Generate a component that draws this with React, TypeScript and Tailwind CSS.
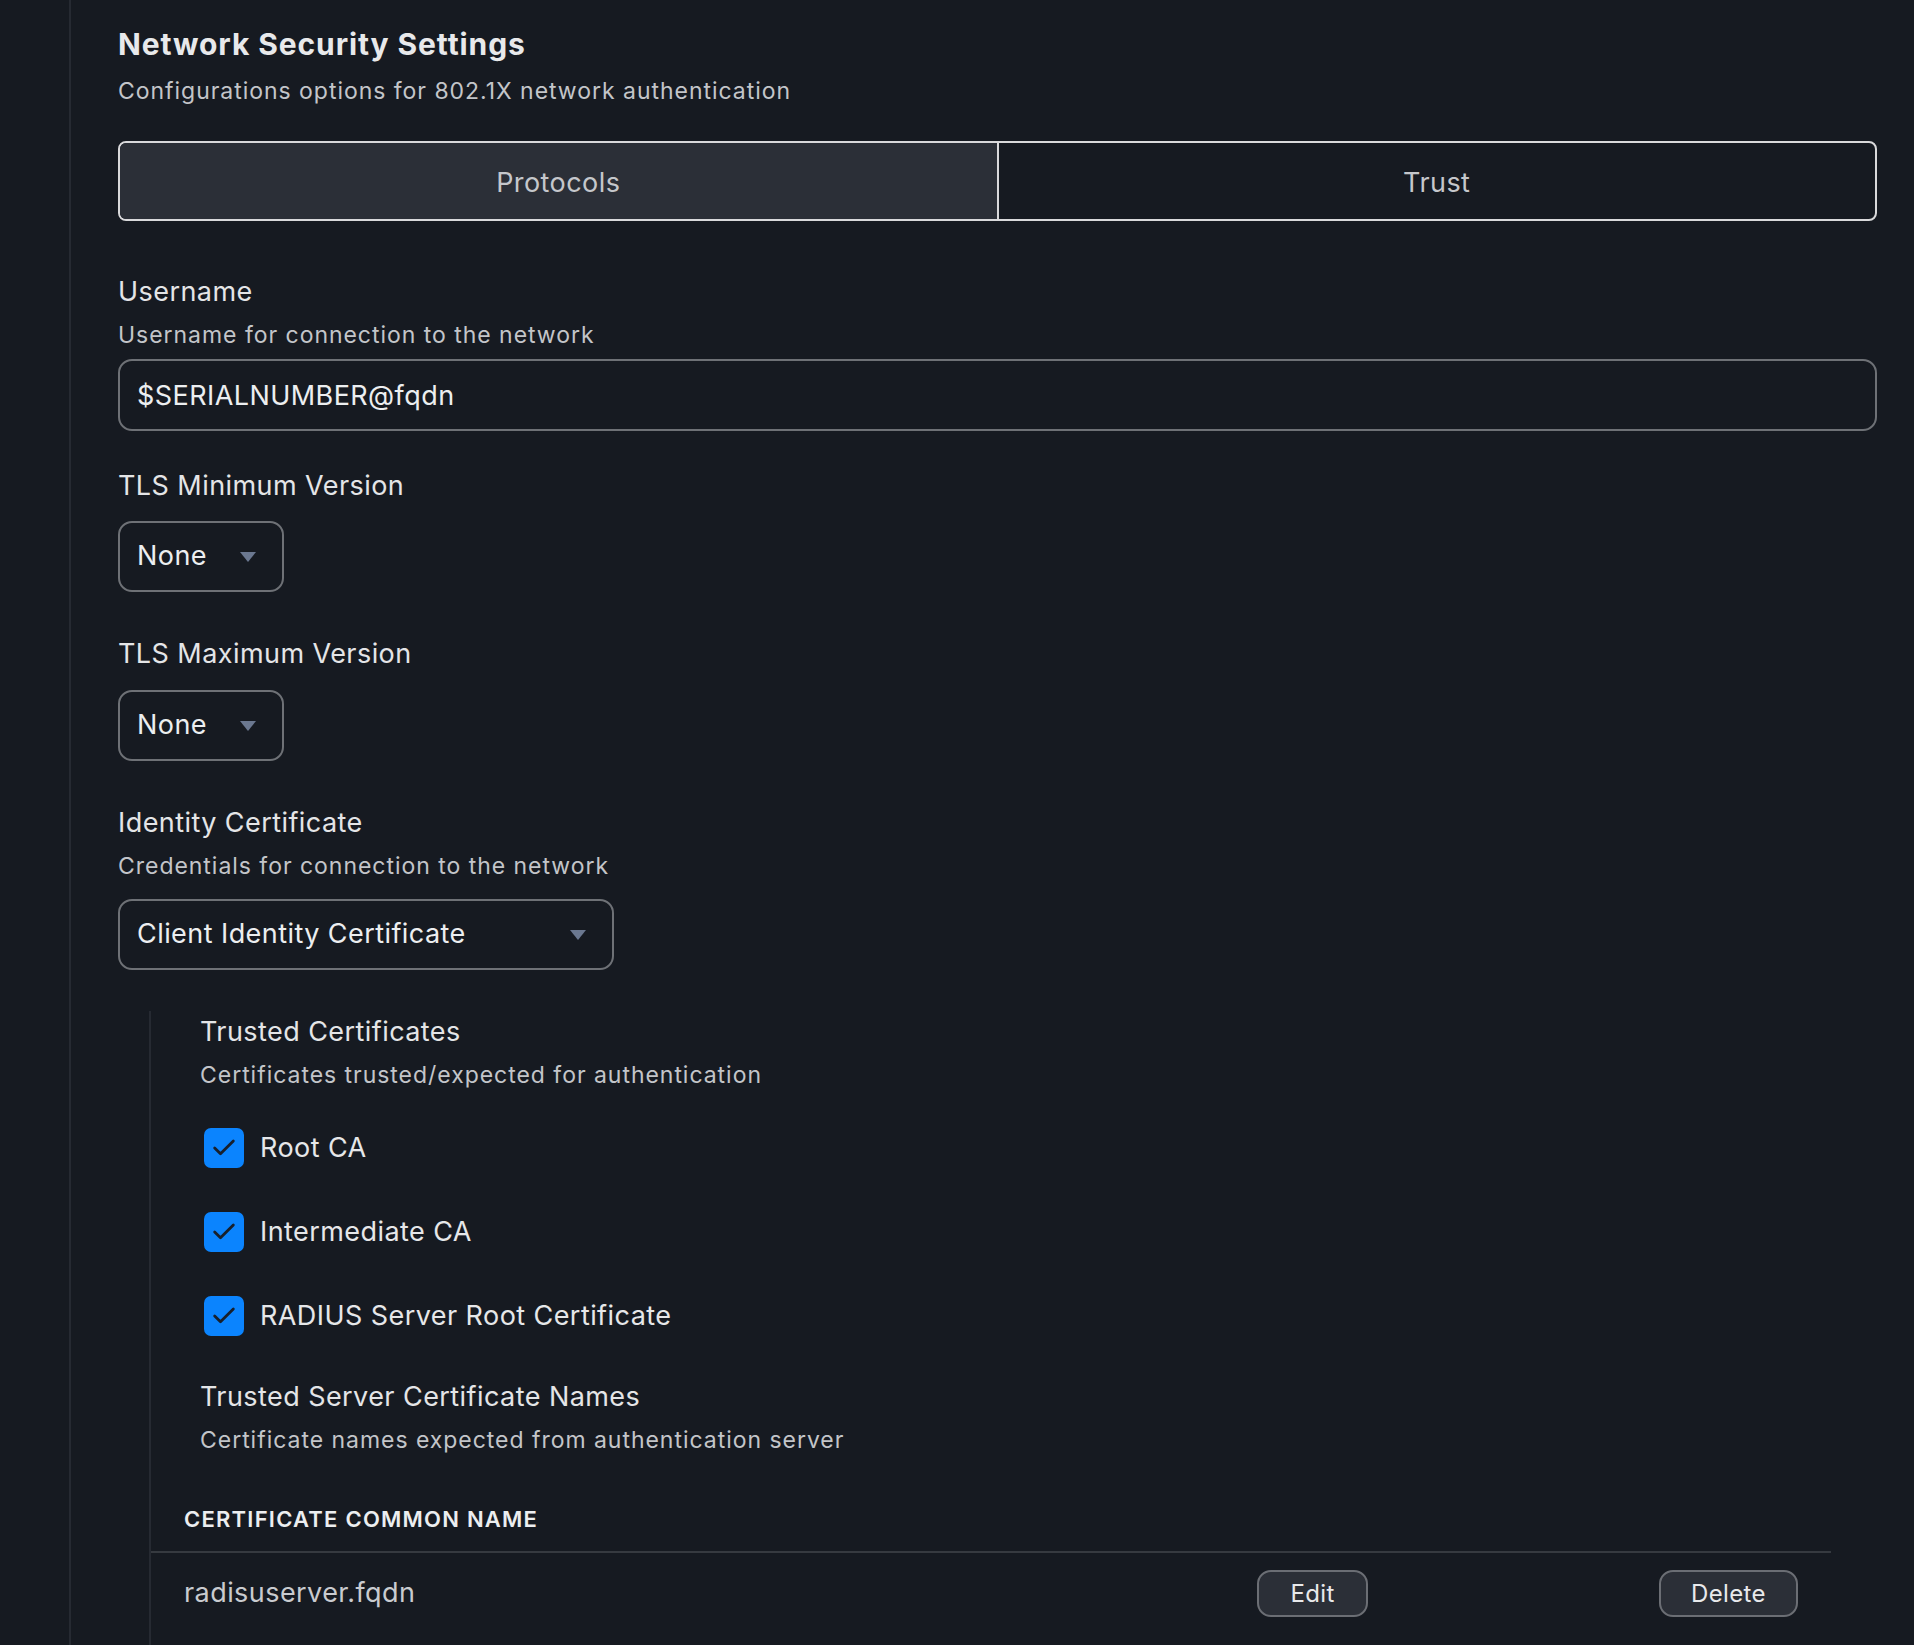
import { Check } from "lucide-react";

const label = "text-[27px] leading-[34px] tracking-[0.016em] text-[#e4e5e7]";
const hint = "text-[23px] leading-[28px] tracking-[0.042em] text-[#c3c5c9]";

function Caret() {
  return (
    <svg width="16" height="10" viewBox="0 0 16 10" className="shrink-0">
      <path d="M0 0 H16 L8 10 Z" fill="#6b7890" />
    </svg>
  );
}

function Select({ value, width }: { value: string; width: string }) {
  return (
    <div
      className={`${width} h-[71px] rounded-[14px] border-2 border-[#6e7176] flex items-center justify-between pl-[17px] pr-[26px]`}
    >
      <span className="text-[27px] tracking-[0.016em] text-[#eceef0]">{value}</span>
      <Caret />
    </div>
  );
}

function Checkbox({ text }: { text: string }) {
  return (
    <div className="flex items-center gap-[16px] ml-[4px]">
      <div className="h-[40px] w-[40px] rounded-[7px] bg-[#0b84fe] flex items-center justify-center">
        <Check className="h-[28px] w-[28px] text-[#18202c]" strokeWidth={2.4} />
      </div>
      <span className="text-[27px] leading-[34px] tracking-[0.016em] text-[#e6e7e9]">{text}</span>
    </div>
  );
}

export default function App() {
  return (
    <div className="h-[1645px] overflow-hidden bg-[#161a21] flex font-[Inter,sans-serif]">
      <aside className="w-[71px] shrink-0 border-r-2 border-[#262a32]" />

      <main className="flex-1 pl-[47px] pr-[37px] pt-[26px]">
        <h1 className="text-[30px] leading-[36px] tracking-[0.03em] font-bold text-[#e8e9eb]">
          Network Security Settings
        </h1>
        <p className={`mt-[15px] ${hint}`}>Configurations options for 802.1X network authentication</p>

        <div className="mt-[36px] h-[80px] flex rounded-[8px] border-2 border-[#d9d9db] overflow-hidden">
          <button className="flex-1 pt-[4px] bg-[#2b2f37] text-[27px] tracking-[0.016em] text-[#c5c7cb] border-r-2 border-[#d9d9db]">
            Protocols
          </button>
          <button className="flex-1 pt-[4px] text-[27px] tracking-[0.016em] text-[#c5c7cb]">Trust</button>
        </div>

        <div className={`mt-[54px] ${label}`}>Username</div>
        <div className={`mt-[12px] ${hint}`}>Username for connection to the network</div>
        <div className="mt-[10px] h-[72px] rounded-[14px] border-2 border-[#6e7176] flex items-center pl-[17px] pt-[2px]">
          <span className="text-[27px] tracking-[0.016em] text-[#eceef0]">$SERIALNUMBER@fqdn</span>
        </div>

        <div className={`mt-[38px] ${label}`}>TLS Minimum Version</div>
        <div className="mt-[18px]">
          <Select value="None" width="w-[166px]" />
        </div>

        <div className={`mt-[45px] ${label}`}>TLS Maximum Version</div>
        <div className="mt-[19px]">
          <Select value="None" width="w-[166px]" />
        </div>

        <div className={`mt-[45px] ${label}`}>Identity Certificate</div>
        <div className={`mt-[12px] ${hint}`}>Credentials for connection to the network</div>
        <div className="mt-[19px]">
          <Select value="Client Identity Certificate" width="w-[496px]" />
        </div>

        <section className="mt-[41px] ml-[31px] border-l-2 border-[#262a32] pb-[60px]">
          <div className="pl-[49px] pt-[4px]">
            <div className={label}>Trusted Certificates</div>
            <div className={`mt-[12px] ${hint}`}>Certificates trusted/expected for authentication</div>
            <div className="mt-[39px] flex flex-col gap-[44px]">
              <Checkbox text="Root CA" />
              <Checkbox text="Intermediate CA" />
              <Checkbox text="RADIUS Server Root Certificate" />
            </div>

            <div className={`mt-[44px] ${label}`}>Trusted Server Certificate Names</div>
            <div className={`mt-[12px] ${hint}`}>Certificate names expected from authentication server</div>
          </div>

          <div className="mt-[51px] w-[1680px]">
            <div className="px-[33px] pb-[18px] text-[22px] leading-[28px] tracking-[0.056em] font-semibold text-[#eceef0]">
              CERTIFICATE COMMON NAME
            </div>
            <div className="h-[2px] bg-[#363a40]" />
            <div className="flex items-center px-[33px] pt-[17px]">
              <span className="flex-1 text-[27px] tracking-[0.016em] text-[#c9cbcf]">radisuserver.fqdn</span>
              <button className="h-[47px] w-[111px] rounded-[14px] border-2 border-[#6b6e74] bg-[#2b2f37] text-[24px] tracking-[0.015em] text-[#e8e9eb]">
                Edit
              </button>
              <div className="w-[291px]" />
              <button className="h-[47px] w-[139px] rounded-[14px] border-2 border-[#6b6e74] bg-[#2b2f37] text-[24px] tracking-[0.015em] text-[#e8e9eb]">
                Delete
              </button>
            </div>
          </div>
        </section>
      </main>
    </div>
  );
}
